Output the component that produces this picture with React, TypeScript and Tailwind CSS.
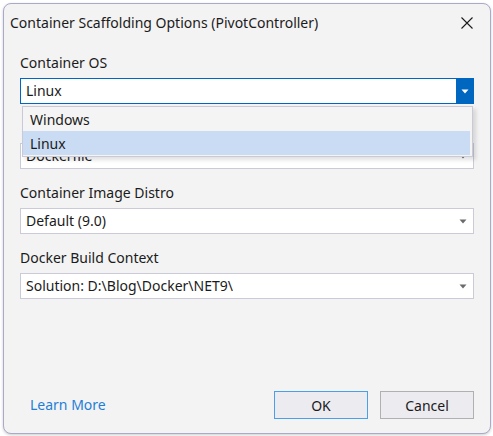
const FONT = "font-['Noto_Sans','Open_Sans',sans-serif]";

function Caret({ color }: { color: string }) {
  return (
    <svg width="8" height="5" viewBox="0 0 8 5" className="shrink-0">
      <path d="M0.5 0.5h7L4 4.5z" fill={color} />
    </svg>
  );
}

function Combo({ value }: { value: string }) {
  return (
    <div className="flex h-[26px] items-center justify-between border border-[#cacad8] bg-white pl-[5px] pr-[6px] text-[14px] text-[#1b1b1b]">
      <span className="truncate leading-5">{value}</span>
      <Caret color="#6b6b6b" />
    </div>
  );
}

function Field({ label, children }: { label?: string; children: React.ReactNode }) {
  return (
    <div className="flex flex-col">
      <span className="h-5 text-[14px] leading-5 text-[#1b1b1b]">{label}</span>
      <div className="relative mt-[5px]">{children}</div>
    </div>
  );
}

export default function App() {
  return (
    <div className={`h-[436px] w-[493px] overflow-hidden bg-white ${FONT}`}>
      <div className="ml-[3px] mt-[3px] flex h-[431px] w-[488px] flex-col rounded-[8px] border border-[#a9a9c9] bg-[#f3f3f3] shadow-[0_1px_3px_rgba(0,0,0,0.2)]">
        {/* title bar */}
        <div className="flex items-start justify-between pl-[6px] pr-[17px] pt-[9px]">
          <span className="text-[14px] leading-5 text-[#1b1b1b]">
            Container Scaffolding Options (PivotController)
          </span>
          <svg width="12" height="12" viewBox="0 0 12 12" className="mt-[4px]">
            <path d="M0.5 0.5l11 11M11.5 0.5l-11 11" stroke="#1b1b1b" strokeWidth="1.1" />
          </svg>
        </div>

        <div className="mt-5 flex flex-col gap-[14px] px-4">
          <Field label="Container OS">
            <div className="flex h-[26px] items-stretch border border-[#0067c0] bg-white text-[14px] text-[#1b1b1b]">
              <span className="flex flex-1 items-center pl-[5px] leading-5">Linux</span>
              <div className="flex w-[17px] items-center justify-center bg-[#0067c0]">
                <Caret color="#ffffff" />
              </div>
            </div>
            <div className="absolute left-[2px] right-px top-[28px] z-10 flex flex-col border border-[#c9c9d8] bg-[#f4f4f4] pb-px pr-[2px] text-[14px] text-[#1b1b1b] shadow-[3px_3px_4px_rgba(0,0,0,0.12)]">
              <div className="flex h-6 items-center pl-[7px]">Windows</div>
              <div className="flex h-6 items-center bg-[#c9dcf3] pl-[7px]">Linux</div>
            </div>
          </Field>
          {/* label of this field is hidden under the open list */}
          <Field>
            <Combo value="Dockerfile" />
          </Field>
          <Field label="Container Image Distro">
            <Combo value="Default (9.0)" />
          </Field>
          <Field label="Docker Build Context">
            <Combo value="Solution: D:\Blog\Docker\NET9\" />
          </Field>
        </div>

        <div className="mt-auto flex items-center justify-between pb-[14px] pl-[26px] pr-4">
          <span className="mt-[-2px] text-[14px] text-[#1f7fd6]">Learn More</span>
          <div className="flex gap-3">
            <button className="h-[28px] w-[94px] border border-[#4aa0e8] bg-[#ebebf0] text-[14px] text-[#1b1b1b]">
              OK
            </button>
            <button className="h-[28px] w-[94px] border border-[#b0b0b0] bg-[#ebebf0] text-[14px] text-[#1b1b1b]">
              Cancel
            </button>
          </div>
        </div>
      </div>
    </div>
  );
}
